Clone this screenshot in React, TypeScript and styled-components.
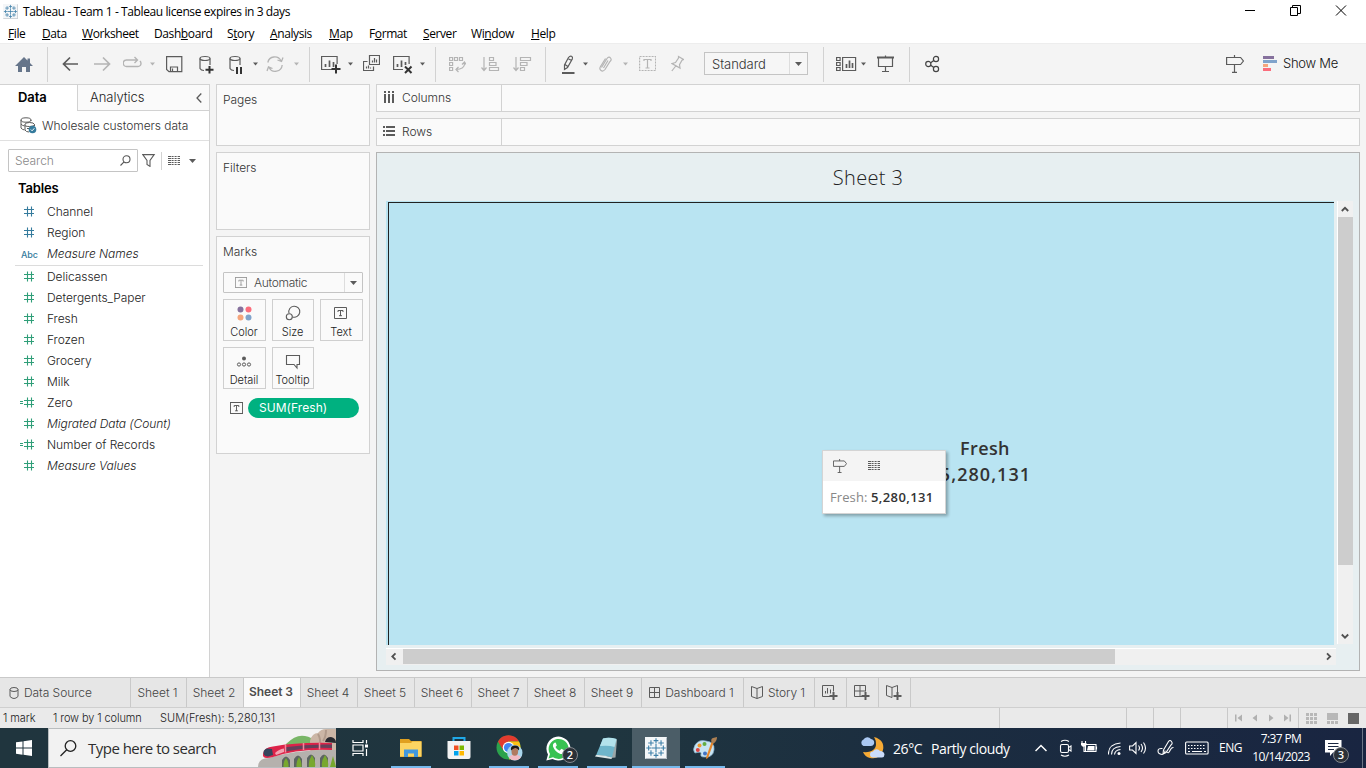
import React from 'react';
import styled, { createGlobalStyle, css } from 'styled-components';

const GlobalStyle = createGlobalStyle`
  * { box-sizing: border-box; }
  html, body { margin: 0; padding: 0; overflow: hidden; }
  svg { display: block; flex: none; }
`;

const ui = '"Inter", "Liberation Sans", sans-serif';
const segoe = '"Open Sans", "Noto Sans", sans-serif';
const line = '#d2d2d2';
const ink = '#5b5b5b';
const faded = '#b4b4b4';

/* ---------- window shell ---------- */

const Window = styled.div`
  width: 1366px;
  height: 768px;
  display: flex;
  flex-direction: column;
  background: #f4f4f4;
  color: #222;
  font-family: ${ui};
  font-size: 12px;
  font-weight: 300;
  letter-spacing: -0.05px;
  white-space: nowrap;
`;

const TitleBar = styled.header`
  height: 23px;
  display: flex;
  align-items: center;
  padding-left: 3px;
  background: #fff;
  color: #000;
  font-family: ${segoe};
  font-size: 12px;
  font-weight: 400;
  letter-spacing: -0.4px;
`;

const TitleText = styled.span`
  flex: 1;
  margin: 0 0 0 5px;
`;

const WindowButtons = styled.div`
  display: flex;
  gap: 34px;
  padding-right: 19px;
  margin-top: -3px;
`;

const MenuBar = styled.nav`
  height: 20px;
  display: grid;
  grid-template-columns: 34px 40px 72px 73px 43px 59px 40px 54px 48px 60px auto;
  align-items: center;
  padding-left: 8px;
  background: #fff;
  color: #000;
  font-family: ${segoe};
  font-size: 12px;
  font-weight: 400;
  line-height: 17px;
  letter-spacing: -0.4px;
  u { text-underline-offset: 1px; }
`;

/* ---------- toolbar ---------- */

const Toolbar = styled.div`
  height: 41px;
  display: flex;
  align-items: flex-start;
  border-top: 1px solid #ededed;
`;

const ToolIcon = styled.svg<{ $gap: number; $color?: string }>`
  height: 20px;
  margin: 10px 0 0 ${(p) => p.$gap}px;
  fill: none;
  stroke: ${(p) => p.$color ?? ink};
  stroke-width: 1.2;
`;

const ToolDivider = styled.span<{ $gap: number }>`
  width: 1px;
  height: 35px;
  margin: 3px 0 0 ${(p) => p.$gap}px;
  background: ${line};
`;

const FitSelect = styled.div`
  width: 104px;
  height: 23px;
  display: flex;
  align-items: center;
  margin: 8px 0 0 20px;
  border: 1px solid #c4c4c4;
  background: #f6f6f6;
  color: #333;
  font-size: 13px;
`;

const SelectText = styled.span`
  flex: 1;
  padding-left: 7px;
`;

const SelectArrow = styled.span`
  width: 18px;
  height: 100%;
  display: flex;
  align-items: center;
  justify-content: center;
  border-left: 1px solid #ddd;
`;

const ShowMe = styled.span`
  width: 83px;
  margin: 11px 0 0 6px;
  font-size: 13px;
  line-height: 17px;
  letter-spacing: -0.25px;
  color: #111;
`;

/* ---------- workspace ---------- */

const Workspace = styled.main`
  height: 593px;
  display: flex;
`;

const DataPane = styled.aside`
  width: 210px;
  border-top: 1px solid ${line};
  border-right: 1px solid ${line};
  background: #fff;
`;

const PaneTabs = styled.div`
  display: flex;
  height: 26px;
  font-size: 13px;
  line-height: 25px;
`;

const ActiveTab = styled.div`
  width: 77px;
  padding-left: 18px;
  font-weight: 600;
  color: #000;
`;

const IdleTab = styled.div`
  flex: 1;
  display: flex;
  align-items: center;
  justify-content: space-between;
  padding: 0 7px 0 12px;
  border-left: 1px solid ${line};
  border-bottom: 1px solid ${line};
  background: #fafafa;
`;

const Source = styled.div`
  height: 30px;
  display: flex;
  align-items: center;
  gap: 5px;
  padding: 0 0 1px 20px;
  border-bottom: 1px solid #e0e0e0;
  color: #333;
`;

const SearchRow = styled.div`
  display: flex;
  align-items: center;
  padding: 8px 0 0 8px;
`;

const SearchBox = styled.div`
  width: 130px;
  height: 23px;
  display: flex;
  align-items: center;
  justify-content: space-between;
  padding: 0 6px;
  border: 1px solid #c4c4c4;
  border-radius: 1px;
  color: #888;
`;

const SearchDivider = styled.span`
  width: 1px;
  height: 18px;
  margin: 0 6px 0 5px;
  background: ${line};
`;

const FilterIcon = styled.svg`
  margin: -1px 0 0 4px;
`;

const MenuArrow = styled.svg`
  margin-left: 9px;
`;

const TablesHeading = styled.h2`
  margin: 8px 0 4px 18px;
  font-size: 13px;
  line-height: 17px;
  font-weight: 600;
  letter-spacing: -0.15px;
  color: #000;
`;

const Field = styled.div<{ $italic?: boolean }>`
  height: 21px;
  display: flex;
  align-items: center;
  gap: 12px;
  padding-left: 18px;
  line-height: 21px;
  font-style: ${(p) => (p.$italic ? 'italic' : 'normal')};
`;

const AbcMark = styled.span`
  width: 17px;
  font-size: 9px;
  font-style: normal;
  font-weight: 500;
  color: #357b9d;
  padding: 1px 0 0 3px;
`;

const FieldDivider = styled.div`
  height: 1px;
  margin: 1px 6px 0 15px;
  background: #dcdcdc;
`;

const CardColumn = styled.section`
  width: 154px;
  margin-left: 6px;
  display: flex;
  flex-direction: column;
  gap: 6px;
`;

const Card = styled.div<{ $height: number }>`
  height: ${(p) => p.$height}px;
  padding: 6px 6px;
  border: 1px solid ${line};
  background: #fafafa;
  color: #333;
  line-height: 17px;
`;

const MarkType = styled.div`
  height: 21px;
  display: flex;
  align-items: center;
  margin: 12px 0 6px;
  border: 1px solid #c4c4c4;
  border-radius: 1px;
  padding-left: 11px;
  color: #444;
  letter-spacing: -0.3px;
`;

const MarkGrid = styled.div`
  display: grid;
  grid-template-columns: 43px 42px 43px;
  grid-auto-rows: 42px;
  gap: 6px;
`;

const MarkButton = styled.div`
  display: flex;
  flex-direction: column;
  align-items: center;
  padding: 3px 1px 0 0;
  border: 1px solid #cfcfcf;
  font-size: 11px;
  line-height: 15px;
  color: #222;
  svg { margin-bottom: 3px; }
`;

const PillRow = styled.div`
  display: flex;
  align-items: center;
  gap: 5px;
  margin: 9px 0 0 7px;
`;

const Pill = styled.div`
  width: 111px;
  height: 20px;
  padding-left: 11px;
  border-radius: 10px;
  background: #00b180;
  color: #fff;
  line-height: 20px;
  letter-spacing: 0.05px;
  font-weight: 400;
`;

const Canvas = styled.section`
  width: 984px;
  margin-left: 6px;
  display: flex;
  flex-direction: column;
  gap: 6px;
`;

const Shelf = styled.div`
  height: 28px;
  border: 1px solid ${line};
  background: #fafafa;
`;

const ShelfLabel = styled.div`
  width: 125px;
  height: 100%;
  display: flex;
  align-items: center;
  gap: 7px;
  padding: 0 0 2px 6px;
  border-right: 1px solid ${line};
  color: #333;
`;

const SheetPanel = styled.div`
  height: 519px;
  border: 1px solid #b3b3b3;
  background: #e7eff1;
`;

const SheetTitle = styled.h1`
  margin: 0;
  height: 48px;
  padding-top: 11px;
  text-align: center;
  font-family: ${segoe};
  font-size: 20px;
  font-weight: 300;
  line-height: 28px;
  letter-spacing: 0.35px;
  color: #222;
`;

const SheetBody = styled.div`
  display: grid;
  grid-template-columns: 948px 17px;
  grid-template-rows: 444px 3px 16px;
  margin-left: 9px;
`;

const View = styled.div`
  height: 444px;
  padding: 1px 0 0 2px;
  background: #bae4f1;
`;

const Plot = styled.div`
  position: relative;
  height: 443px;
  border-top: 1px solid #222;
  border-left: 1px solid #222;
  background: #b9e4f2;
`;

const MarkLabel = styled.div`
  position: absolute;
  left: 516px;
  top: 232px;
  width: 160px;
  text-align: center;
  font-family: ${segoe};
  font-size: 18px;
  font-weight: 600;
  line-height: 26px;
  letter-spacing: 0.4px;
  color: #333;
`;

const MarkValue = styled.div`
  letter-spacing: 1.05px;
  margin-left: 1px;
`;

const Tooltip = styled.div`
  position: absolute;
  left: 433px;
  top: 247px;
  width: 124px;
  height: 64px;
  border: 1px solid #d4d4d4;
  background: #fff;
  box-shadow: 2px 2px 3px rgba(0, 0, 0, 0.3);
`;

const TooltipTools = styled.div`
  height: 30px;
  display: flex;
  align-items: center;
  gap: 21px;
  padding: 0 0 1px 10px;
  background: #f4f4f4;
`;

const TooltipText = styled.div`
  padding: 8px 0 0 7px;
  font-family: ${segoe};
  font-size: 13px;
  font-weight: 400;
  line-height: 17px;
  letter-spacing: 0.1px;
  color: #888;
  b { font-weight: 600; color: #333; letter-spacing: 0.4px; }
`;

const VScroll = styled.div`
  width: 16px;
  height: 443px;
  margin-left: 3px;
  padding: 0 1px 0 0;
  display: flex;
  flex-direction: column;
  align-items: center;
  border-left: 1px solid #fff;
  background: #f0f0f0;
`;

const HScroll = styled.div`
  grid-row: 3;
  width: 950px;
  height: 17px;
  display: flex;
  border-top: 1px solid #fff;
  background: #f0f0f0;
`;

const Thumb = styled.div<{ $w: number; $h: number }>`
  width: ${(p) => p.$w}px;
  height: ${(p) => p.$h}px;
  background: #cdcdcd;
`;

const Spacer = styled.div`
  flex: 1;
`;

/* ---------- sheet tabs and status ---------- */

const SheetTabs = styled.div`
  height: 31px;
  display: flex;
  border-top: 1px solid #c9c9c9;
  border-bottom: 1px solid #cfcfcf;
  background: #e6e6e6;
`;

const SheetTab = styled.div<{ $width: number; $active?: boolean; $left?: boolean }>`
  width: ${(p) => p.$width}px;
  display: flex;
  align-items: center;
  justify-content: ${(p) => (p.$left ? 'flex-start' : 'center')};
  gap: 5px;
  padding-right: 2px;
  border-right: 1px solid #c9c9c9;
  color: #444;
  ${(p) => p.$left && css`padding-left: 9px;`}
  ${(p) =>
    p.$active &&
    css`
      background: #fafafa;
      color: #4e4e4e;
      font-weight: 600;
      padding-bottom: 2px;
    `}
`;

const StatusBar = styled.div`
  height: 20px;
  display: flex;
  align-items: center;
  padding-left: 3px;
  background: #eaeaea;
  font-size: 11px;
`;

const StatusText = styled.span<{ $width: number; $spacing: number }>`
  width: ${(p) => p.$width}px;
  letter-spacing: ${(p) => p.$spacing}px;
`;

const StatusCell = styled.div<{ $width: number }>`
  width: ${(p) => p.$width}px;
  height: 20px;
  display: flex;
  align-items: center;
  justify-content: center;
  border-left: 1px solid #c9c9c9;
`;

/* ---------- taskbar ---------- */

const Taskbar = styled.footer`
  height: 40px;
  display: flex;
  background: linear-gradient(90deg, #20353e 0%, #1f353f 45%, #1b2d40 68%, #192541 100%);
  color: #fff;
  font-family: ${segoe};
  font-weight: 400;
`;

const StartButton = styled.div`
  width: 48px;
  padding: 12px 0 0 16px;
`;

const TaskSearch = styled.div`
  width: 288px;
  height: 40px;
  display: flex;
  align-items: center;
  border: 1px solid #b9bdbf;
  border-right: 0;
  background: #f2f2f2;
  color: #2e2e2e;
  padding-left: 11px;
  font-size: 15px;
  letter-spacing: -0.52px;
`;

const SearchHint = styled.span`
  flex: 1;
  padding-left: 11px;
`;

const TaskItem = styled.div<{ $gap?: number; $open?: boolean; $focused?: boolean }>`
  position: relative;
  width: 48px;
  height: 40px;
  display: flex;
  align-items: center;
  justify-content: center;
  margin-left: ${(p) => p.$gap ?? 0}px;
  background: ${(p) => (p.$focused ? '#4b5d67' : 'transparent')};
  ${(p) =>
    p.$open &&
    css`
      &::after {
        content: '';
        position: absolute;
        left: ${p.$focused ? 0 : 4}px;
        right: ${p.$focused ? 0 : 4}px;
        bottom: 0;
        height: 2px;
        background: #76b9ed;
      }
    `}
`;

const CountBadge = styled.span<{ $x: number; $y: number }>`
  position: absolute;
  left: ${(p) => p.$x}px;
  top: ${(p) => p.$y}px;
  width: 16px;
  height: 16px;
  border: 1px solid #85898f;
  border-radius: 50%;
  background: #2b3138;
  color: #fff;
  text-align: center;
  font-size: 11px;
  line-height: 14px;
  letter-spacing: 0;
  font-weight: 600;
`;

const Weather = styled.div`
  display: flex;
  align-items: center;
  margin-left: 131px;
  width: 175px;
  font-size: 14px;
  letter-spacing: -0.4px;
`;

const Temperature = styled.span`
  width: 38px;
  margin-left: 8px;
`;

const TrayIcon = styled.svg<{ $gap: number }>`
  height: 20px;
  margin: 10px 0 0 ${(p) => p.$gap}px;
  fill: none;
  stroke: #fff;
  stroke-width: 1.1;
`;

const Language = styled.span`
  width: 24px;
  margin-left: 10px;
  font-size: 12px;
  line-height: 39px;
  letter-spacing: -0.5px;
`;

const Clock = styled.div`
  width: 58px;
  margin-left: 9px;
  padding-top: 2px;
  text-align: center;
  font-size: 12px;
  line-height: 18px;
  letter-spacing: -0.62px;
`;

const Notifications = styled.div`
  position: relative;
  margin: 12px 0 0 15px;
`;

const DesktopEdge = styled.span`
  width: 1px;
  margin-left: auto;
  margin-right: 3px;
  background: #6b7585;
`;

/* ---------- shared drawings ---------- */

const Caret = ({ gap, color = ink }: { gap: number; color?: string }) => (
  <ToolIcon $gap={gap} width="5" viewBox="0 0 5 20">
    <path d="M0 8.5h5L2.5 11.5z" fill={color} stroke="none" />
  </ToolIcon>
);

const DropArrow = () => (
  <svg width="7" height="4" viewBox="0 0 7 4"><path d="M0 0h7L3.5 4z" fill="#5b5b5b" /></svg>
);

const TextMark = ({ w = 14, h = 12, color = '#5b5b5b' }: { w?: number; h?: number; color?: string }) => (
  <svg width={w} height={h} viewBox="0 0 14 12" preserveAspectRatio="none" fill="none" stroke={color}>
    <rect x=".5" y=".5" width="13" height="11" />
    <path d="M4.5 5V3.5h5V5M7 3.5v5.5M5.5 8.8h3" />
  </svg>
);

const Signpost = ({ size = 14 }: { size?: number }) => (
  <svg width={size} height={size} viewBox="0 0 18 18" fill="none" stroke={ink} strokeWidth="1.2">
    <path d="M.6 2.5h14l2.8 3.5-2.8 3.5H.6zM8.5 0v2.5M8.5 9.5v8M6 17.4h5" />
  </svg>
);

const DataGrid = () => (
  <svg width="12" height="9" viewBox="0 0 12 9" stroke={ink} strokeDasharray="3 .6 2 1 2 1 3 0">
    <path d="M0 .5h12M0 2.5h12M0 4.5h12M0 6.5h12M0 8.5h12" />
  </svg>
);

const Hash = ({ color, calc }: { color: string; calc?: boolean }) => (
  <svg width="17" height="11" viewBox="0 0 17 11" fill="none" stroke={color}>
    <path d="M6 3.5h10M6 7.5h10M9.5.5v10M13.5.5v10" strokeWidth="1.1" />
    {calc && <path d="M2 4.5h3M2 6.5h3" />}
  </svg>
);

const starPluses = [
  [12, 12, 5], [12, 4, 2.6], [12, 20, 2.6], [4, 12, 2.6], [20, 12, 2.6],
  [6.5, 6.5, 3], [17.5, 6.5, 3], [6.5, 17.5, 3], [17.5, 17.5, 3],
];

const TableauMark = ({ size }: { size: number }) => (
  <svg width={size} height={size} viewBox="0 0 24 24">
    <rect width="24" height="24" fill="#f4f6f8" />
    <path d="M.5 23.5h23V.5" fill="none" stroke="#aab4bc" />
    <g stroke="#3d7fa8" strokeWidth="1.2">
      {starPluses.map(([x, y, r]) => (
        <path key={`${x}-${y}`} d={`M${x - r} ${y}h${r * 2}M${x} ${y - r}v${r * 2}`} />
      ))}
    </g>
  </svg>
);

const ChartPlus = () => (
  <svg width="16" height="16" viewBox="0 0 16 16" fill="none" stroke={ink}>
    <path d="M8 11.5H.5V.5h11v6M3.5 8.5V6M5.5 8.5V3M8.5 8.5V4.5" />
    <path d="M11.5 7v8M7.5 11h8" strokeWidth="2" />
  </svg>
);

const GridPlus = () => (
  <svg width="16" height="16" viewBox="0 0 16 16" fill="none" stroke={ink}>
    <path d="M8 11.5H.5V.5h11v6M.5 6h11M6 .5v11" />
    <path d="M11.5 7v8M7.5 11h8" strokeWidth="2" />
  </svg>
);

const StoryPlus = () => (
  <svg width="16" height="16" viewBox="0 0 16 16" fill="none" stroke={ink}>
    <path d="M6 12.5L.5 10.5V.5L6 2.5L11.5.5V7M6 2.5v10" />
    <path d="M11.5 7v8M7.5 11h8" strokeWidth="2" />
  </svg>
);

const fields: { name: string; kind: 'dim' | 'abc' | 'measure' | 'calc'; italic?: boolean }[] = [
  { name: 'Channel', kind: 'dim' },
  { name: 'Region', kind: 'dim' },
  { name: 'Measure Names', kind: 'abc', italic: true },
  { name: 'Delicassen', kind: 'measure' },
  { name: 'Detergents_Paper', kind: 'measure' },
  { name: 'Fresh', kind: 'measure' },
  { name: 'Frozen', kind: 'measure' },
  { name: 'Grocery', kind: 'measure' },
  { name: 'Milk', kind: 'measure' },
  { name: 'Zero', kind: 'calc' },
  { name: 'Migrated Data (Count)', kind: 'measure', italic: true },
  { name: 'Number of Records', kind: 'calc' },
  { name: 'Measure Values', kind: 'measure', italic: true },
];

const FieldRow = ({ field }: { field: (typeof fields)[number] }) => (
  <Field $italic={field.italic}>
    {field.kind === 'abc' ? (
      <AbcMark>Abc</AbcMark>
    ) : (
      <Hash color={field.kind === 'dim' ? '#357b9d' : '#2f9e78'} calc={field.kind === 'calc'} />
    )}
    {field.name}
  </Field>
);

const AppToolbar = () => (
  <Toolbar>
    <ToolIcon $gap={15} width="18" viewBox="0 0 18 20">
      <path d="M9 3L0 12h3v6h4v-5h4v5h4v-6h3l-3-3V4.5h-2.5V6.5z" fill="#66758a" stroke="none" />
    </ToolIcon>
    <ToolDivider $gap={14} />
    <ToolIcon $gap={14} width="17" viewBox="0 0 17 20">
      <path d="M16 10H1.5M8 3.5L1.5 10L8 16.5" strokeWidth="1.7" />
    </ToolIcon>
    <ToolIcon $gap={15} $color={faded} width="17" viewBox="0 0 17 20">
      <path d="M0 10h15.5M9 3.5L15.5 10L9 16.5" strokeWidth="1.7" />
    </ToolIcon>
    <ToolIcon $gap={12} $color={faded} width="19" viewBox="0 0 19 20">
      <path d="M14 12.5H3.5a3 3 0 0 1 0-6.500H14M14 12.5h1a3 3 0 0 0 3-3q0-1.500-1-2.500M11.5 3L14.5 6L11.5 9" strokeWidth="1.4" />
    </ToolIcon>
    <Caret gap={8} color={faded} />
    <ToolIcon $gap={11} width="17" viewBox="0 0 17 20">
      <path d="M.6 2.6h15.2v15H3L.6 15.4zM4.500 17.5v-4.500h7v4.500M6.500 17v-2.500" />
    </ToolIcon>
    <ToolIcon $gap={16} width="15" viewBox="0 0 15 20">
      <ellipse cx="6" cy="4.5" rx="5" ry="2" />
      <path d="M1 4.5v10q1 2 4 2M11 4.5V11" />
      <path d="M10.5 12v7.500M6.5 15.7h8" stroke="#333" strokeWidth="2" />
    </ToolIcon>
    <ToolIcon $gap={15} width="14" viewBox="0 0 14 20">
      <ellipse cx="6" cy="4.5" rx="5" ry="2" />
      <path d="M1 4.5v10q1 2 4 2M11 4.5V11" />
      <path d="M8 13v7M12 13v7" stroke="#333" strokeWidth="2" />
    </ToolIcon>
    <Caret gap={10} />
    <ToolIcon $gap={8} $color={faded} width="18" viewBox="0 0 18 20">
      <path d="M1.8 8.5A7 7 0 0 1 15 7M16.2 11A7 7 0 0 1 3 13.5M17 3.5L15.5 7.5L11.5 6M1 17L2.5 12.8L6.5 14.5" strokeWidth="1.3" />
    </ToolIcon>
    <Caret gap={10} color={faded} />
    <ToolDivider $gap={10} />
    <ToolIcon $gap={11} width="20" viewBox="0 0 20 20">
      <path d="M11 15.5H.6V2.5h15.500V10" />
      <path d="M4.5 13V10M8.5 13V6.5M12.5 13V8" strokeWidth="1.7" />
      <path d="M15 10.5v9M10.5 15h9" stroke="#333" strokeWidth="2" />
    </ToolIcon>
    <Caret gap={7} />
    <ToolIcon $gap={10} width="17" viewBox="0 0 17 20">
      <path d="M6.5 1.5h10v9h-10zM4.5 7.5H.5v9h10v-4M9.5 8.5v-2M11.5 8.5V4M13.5 8.5V5.5M3.5 14.5v-2M5.5 14.5v-3M7.5 14.5v-1" />
    </ToolIcon>
    <ToolIcon $gap={13} width="20" viewBox="0 0 20 20">
      <path d="M10 15.5H.6V2.5h15.500V10" />
      <path d="M4.5 13V10M8.5 13V6.5M12.5 11V8" strokeWidth="1.7" />
      <path d="M12 12.5l6.500 6.500M18.5 12.5L12 19" stroke="#333" strokeWidth="2" />
    </ToolIcon>
    <Caret gap={7} />
    <ToolDivider $gap={10} />
    <ToolIcon $gap={13} $color={faded} width="17" viewBox="0 0 17 20">
      <path d="M.6 3.5h3v3h-3zM5.500 3.500h3v3h-3zM10.500 3.5h3v3h-3zM.6 8.500h3v3h-3zM.6 13.500h3v3h-3zM15.500 8v2q0 5-8.500 5.500M13 10.500L15.500 8L17 10.500M9.5 13L7 15.5L9.5 18" />
    </ToolIcon>
    <ToolIcon $gap={15} $color={faded} width="19" viewBox="0 0 19 20">
      <path d="M3 3v13M.5 13.5L3 16.5L5.5 13.5M8.5 3.5h4v3h-4zM8.5 8.500h6.500v3H8.5zM8.5 13.500h9v3h-9z" />
    </ToolIcon>
    <ToolIcon $gap={13} $color={faded} width="19" viewBox="0 0 19 20">
      <path d="M3 3v13M.5 13.5L3 16.5L5.5 13.5M7.5 3.5h10v3h-10zM7.5 8.500h6.500v3H7.5zM7.5 13.500h4v3h-4z" />
    </ToolIcon>
    <ToolDivider $gap={13} />
    <ToolIcon $gap={16} width="13" viewBox="0 0 13 20">
      <path d="M6.500 3.500Q8 1.500 9.500 2.200T10.300 5L5.500 13.500L2.500 15.500V11zM3 10.5L5.8 12.5M6 4.500L9.5 6.5" />
      <path d="M0 19h12.5" strokeWidth="2" />
    </ToolIcon>
    <Caret gap={8} />
    <ToolIcon $gap={11} $color={faded} width="13" viewBox="0 0 13 20">
      <path d="M2.5 13.5L8 4.5Q10 2 11.5 4T11 7.5L6 15.5Q4 18 2 16.5T1.5 12.5L6.5 4.5M4.5 14L9 6.5" />
    </ToolIcon>
    <Caret gap={11} color={faded} />
    <ToolIcon $gap={11} $color={faded} width="17" viewBox="0 0 17 20">
      <path d="M.6 2.5h16v14H.6z" strokeDasharray="2 1" />
      <path d="M5 7V5.5h7V7M8.5 5.5v8.500M6.5 14h4" />
    </ToolIcon>
    <ToolIcon $gap={15} $color={faded} width="13" viewBox="0 0 13 20">
      <path d="M7.5 2.5l5 3-1.500.7-2.500 4.500.5 3.300L1 9.5l3.500-1L7.5 4zM4.8 12L.8 17" />
    </ToolIcon>
    <FitSelect>
      <SelectText>Standard</SelectText>
      <SelectArrow><DropArrow /></SelectArrow>
    </FitSelect>
    <ToolDivider $gap={15} />
    <ToolIcon $gap={12} width="21" viewBox="0 0 21 20">
      <path d="M.6 3.5h3.500v3H.6zM.6 8.5h3.500v3H.6zM.6 13.5h3.500v3H.6zM6.6 3.5h13v13h-13z" />
      <path d="M10.5 14v-4M13.5 14V6.5M16.5 14V9" strokeWidth="1.7" />
    </ToolIcon>
    <Caret gap={4} />
    <ToolIcon $gap={11} width="17" viewBox="0 0 17 20">
      <path d="M0 3.5h17" strokeWidth="2" />
      <path d="M1.5 3.5v9h14v-9M8.5 12.5v5M5 17.5h7M8.5 1.5v2" />
    </ToolIcon>
    <ToolDivider $gap={15} />
    <ToolIcon $gap={15} width="15" viewBox="0 0 15 20" $color="#444">
      <path d="M5.7 8.8L8.8 6.5M5.7 11.2L8.8 13.5" />
      <circle cx="3.3" cy="10" r="2.6" /><circle cx="11" cy="5" r="2.6" /><circle cx="11" cy="15" r="2.6" />
    </ToolIcon>
    <Spacer />
    <ToolIcon $gap={0} width="18" viewBox="0 0 18 20">
      <path d="M.6 3.5h14l2.800 3.500-2.800 3.500H.6zM8.5 1v2.500M8.5 10.5v8M6 18.4h5" />
    </ToolIcon>
    <ToolIcon $gap={19} width="14" viewBox="0 0 14 20">
      <g stroke="none">
        <rect y="2" width="11" height="3" fill="#86719d" />
        <rect y="6" width="14" height="3" fill="#80a3cb" />
        <rect y="10" width="5" height="3" fill="#f5a57c" />
        <rect y="14" width="8" height="3" fill="#fb6d7c" />
      </g>
    </ToolIcon>
    <ShowMe>Show Me</ShowMe>
  </Toolbar>
);

const MarksCard = () => (
  <Card $height={218}>
    Marks
    <MarkType>
      <TextMark w={12} h={11} color="#999" />
      <SelectText>Automatic</SelectText>
      <SelectArrow><DropArrow /></SelectArrow>
    </MarkType>
    <MarkGrid>
      <MarkButton>
        <svg width="18" height="19" viewBox="0 0 18 19">
          <circle cx="5.5" cy="6.5" r="3" fill="#86719d" /><circle cx="13.5" cy="6.5" r="3" fill="#fb6d7c" />
          <circle cx="5.5" cy="14.500" r="3" fill="#f5a57c" /><circle cx="13.5" cy="14.500" r="3" fill="#80a3cb" />
        </svg>
        Color
      </MarkButton>
      <MarkButton>
        <svg width="18" height="19" viewBox="0 0 18 19" fill="none" stroke={ink} strokeWidth="1.1">
          <path d="M5 10.2A5.5 5.5 0 1 1 8.5 13.9" /><circle cx="5.3" cy="13.8" r="3" />
        </svg>
        Size
      </MarkButton>
      <MarkButton>
        <svg width="18" height="19" viewBox="0 0 18 19" fill="none" stroke={ink}>
          <path d="M2.5 4.5h12v11h-12zM6 9V7.500h5V9M8.5 7.500V13M7 12.700h3" />
        </svg>
        Text
      </MarkButton>
      <MarkButton>
        <svg width="18" height="19" viewBox="0 0 18 19" fill="none" stroke={ink}>
          <circle cx="9" cy="7.500" r="2" fill={ink} stroke="none" />
          <circle cx="4" cy="13.500" r="1.6" /><circle cx="9" cy="13.500" r="1.6" /><circle cx="14" cy="13.500" r="1.6" />
        </svg>
        Detail
      </MarkButton>
      <MarkButton>
        <svg width="18" height="19" viewBox="0 0 18 19" fill="none" stroke={ink} strokeWidth="1.1">
          <path d="M2.5 4.5h13v9h-2.500v3.500L10 13.500H2.500z" />
        </svg>
        Tooltip
      </MarkButton>
    </MarkGrid>
    <PillRow>
      <TextMark w={13} h={12} />
      <Pill>SUM(Fresh)</Pill>
    </PillRow>
  </Card>
);

const TrainArt = () => (
  <svg width="78" height="38" viewBox="0 0 78 38">
    <path d="M28 15Q38 5 47 7q7 1 10 6v8H28z" fill="#79b667" />
    <path d="M52 12Q54 4 60 4Q63 0 68 0h10v38H53z" fill="#cbb6a6" />
    <path d="M60 5q3 5 2 12M68 1q0 7-3 11" stroke="#b09a8b" strokeWidth="2" fill="none" />
    <path d="M67 13q1-5 6-5q5 1 5 6z" fill="#292a30" />
    <path d="M0 38q0-9 11-9Q38 20 78 21v17z" fill="#b5b1ad" />
    <g fill="#5c6462">
      <path d="M24 38V31q4-7 8 0v7zM36 38V30q4-7 8 0v8zM49 38V29q4-7 8 0v9zM62 38V29q4-7 8 0v9z" />
    </g>
    <g fill="#78a82e">
      <path d="M28 29q3 4 2.500 9h-5q-.5-5 2.500-9zM41 28q3 5 2.500 10h-5q-.5-5 2.500-10zM54 26q4 6 3 12h-6q-1-6 3-12zM67 26q4 6 3 12h-6q-1-6 3-12zM75 27l3 11h-6z" />
    </g>
    <path d="M5 25Q6 18 15 17.500Q40 13 74 14v7Q40 19.500 15 28Q4 31 5 25z" fill="#dc2349" />
    <path d="M27 18.300Q50 14.800 74 15.500v3.500Q50 17.500 28 22.500z" fill="#64405a" />
    <path d="M5.500 23q1-3.500 4-3.500l4.500.5 1 6-5 1.500q-5-.5-4.500-4.500z" fill="#34445c" />
    <path d="M17 24q4-4 9-4.500v3.500L18 26z" fill="#f2a3b2" />
    <path d="M27.500 15.500v8M45.500 14v7M61.500 13.500v7" stroke="#f58a9d" strokeWidth="1.500" />
  </svg>
);

const AppTaskbar = () => (
  <Taskbar>
    <StartButton>
      <svg width="16" height="16" viewBox="0 0 16 16" fill="#fff">
        <path d="M0 2.3L6.5 1.4V7.5H0zM7.5 1.2L16 0v7.500H7.5zM0 8.5h6.500v6.200L0 13.8zM7.5 8.5H16V16l-8.500-1.200z" />
      </svg>
    </StartButton>
    <TaskSearch>
      <svg width="17" height="17" viewBox="0 0 17 17" fill="none" stroke="#222" strokeWidth="1.3">
        <circle cx="10.5" cy="6" r="5.3" /><path d="M6.7 9.8L.5 16" />
      </svg>
      <SearchHint>Type here to search</SearchHint>
      <TrainArt />
    </TaskSearch>
    <TaskItem>
      <svg width="17" height="16" viewBox="0 0 17 16" fill="none" stroke="#fff" strokeWidth="1.2">
        <path d="M1 0v2.500h10V0M1 16v-2.500h10V16M1 5h10v6H1zM14.5 0v3.500M14.5 9v7" />
        <path d="M13 4.5h3v3h-3z" fill="#fff" stroke="none" />
      </svg>
    </TaskItem>
    <TaskItem $gap={3} $open>
      <svg width="22" height="18" viewBox="0 0 22 18">
        <path d="M0 0h9l2 2h10.500v16H0z" fill="#e0a020" />
        <path d="M0 4h11l1.500-1.500h9V17.5H0z" fill="#fcd462" />
        <path d="M4 18v-7.500h14V18h-4v-3.500H8V18z" fill="#4298dd" />
      </svg>
    </TaskItem>
    <TaskItem>
      <svg width="24" height="24" viewBox="0 0 24 24">
        <path d="M6.5 6V2h11v4" fill="none" stroke="#20a9e8" strokeWidth="2" />
        <path d="M.5 5h23v16a2 2 0 0 1-2 2h-19a2 2 0 0 1-2-2z" fill="#f3f3f3" />
        <path d="M7 9.5h4.500V14H7z" fill="#f15022" /><path d="M12.5 9.5H17V14h-4.500z" fill="#7eb900" />
        <path d="M7 15h4.500v4.500H7z" fill="#00a3ee" /><path d="M12.5 15H17v4.500h-4.500z" fill="#ffb800" />
      </svg>
    </TaskItem>
    <TaskItem $gap={2} $open>
      <svg width="27" height="26" viewBox="0 0 27 26">
        <circle cx="12.5" cy="12.5" r="12" fill="#2ba24c" />
        <path d="M2 6.5A12 12 0 0 1 23 6.5H12.5L7 15z" fill="#e33b2e" />
        <path d="M23 6.5A12 12 0 0 1 13 24.5L17 15L12.5 6.5z" fill="#fbc116" />
        <circle cx="12.5" cy="12.5" r="5.8" fill="#fff" /><circle cx="12.5" cy="12.5" r="4.6" fill="#4285f4" />
        <circle cx="18.8" cy="17.8" r="7.7" fill="#a9d6ec" />
        <path d="M12.8 22.5q1-2.500 6-2.700q5 .2 6 2.700a7.700 7.700 0 0 1-12 0z" fill="#f1bbc4" />
        <ellipse cx="18.8" cy="16.5" rx="3.3" ry="4.3" fill="#b07a60" />
        <path d="M15 15.5q-1-5 4-5t4 5q-2-3-4-2.500T15 15.5z" fill="#1c1717" />
      </svg>
    </TaskItem>
    <TaskItem $gap={1} $open>
      <svg width="25" height="25" viewBox="0 0 25 25">
        <path d="M.3 24.5L2 18.5A12 12 0 1 1 6.5 23z" fill="#fff" />
        <path d="M2.5 22.5L4 18A10 10 0 1 1 7 21.2z" fill="#38c251" />
        <path d="M9 6.5q-2.500 1-2 4Q9 16 14.500 18q3 .5 4-2v-1.500l-3-1.700-2 2Q10.5 13.500 9.500 11l1.300-1.500L9.800 6.700z" fill="#fff" />
      </svg>
      <CountBadge $x={28} $y={19}>2</CountBadge>
    </TaskItem>
    <TaskItem $gap={1} $open>
      <svg width="24" height="22" viewBox="0 0 24 22">
        <path d="M20 3l2-.5-1.500 18L16 21z" fill="#9aa6a8" />
        <path d="M8 1.500Q14-.3 21.500 2L17 20.500Q9 18 1 18.500z" fill="#6fb5ca" />
        <path d="M8 1.500Q14-.3 21.500 2L19.500 10Q14 8 5 9z" fill="#b4e2eb" />
        <path d="M1 18Q9 17.500 17 20.500L16.500 22L0 19.500z" fill="#dce7e8" />
      </svg>
    </TaskItem>
    <TaskItem $gap={1} $open $focused><TableauMark size={22} /></TaskItem>
    <TaskItem $gap={1} $open>
      <svg width="25" height="24" viewBox="0 0 25 24">
        <path d="M2 9Q6 3 13 5q9 1 8 9t-10 7Q7 21 8 18T2 17q-3-3 0-8z" fill="#c8e4f3" stroke="#80aac5" strokeWidth=".7" />
        <circle cx="6.5" cy="9.5" r="2" fill="#ef9b30" /><circle cx="11.5" cy="8" r="2" fill="#62ae43" />
        <circle cx="4.8" cy="14" r="2" fill="#db4344" /><circle cx="12" cy="17.5" r="2" fill="#4173c3" />
        <path d="M18.5 6L20.5 7L15 22l-2 1 .5-3z" fill="#e6872c" />
        <path d="M18.5 6.5q-1-4 1.500-4.500l4-1q0 4-3.500 6.500z" fill="#ad8053" />
      </svg>
    </TaskItem>
    <Weather>
      <svg width="25" height="24" viewBox="0 0 25 24">
        <path d="M14 1Q25 4 23 14Q20 24 10 22Q5 21 3 16q10 1 12.500-5Q17 6 14 1z" fill="#f6aa35" />
        <path d="M3.5 10a3.500 3.500 0 0 1 0-6.500A4.5 4.5 0 0 1 11 3q4 1 3 5-1 2-3 2z" fill="#abc9f3" />
        <path d="M13 21.5a3 3 0 0 1 0-6a4 4 0 0 1 7-.5q4 0 4.500 3.500 0 2.500-2.500 3z" fill="#cadcfb" />
      </svg>
      <Temperature>26°C</Temperature>
      Partly cloudy
    </Weather>
    <TrayIcon $gap={0} width="12" viewBox="0 0 12 20"><path d="M.5 13L6 7.5L11.5 13" strokeWidth="1.5" /></TrayIcon>
    <TrayIcon $gap={12} width="13" viewBox="0 0 13 20">
      <rect x="1.5" y="6.5" width="8" height="8" rx="1.5" /><path d="M9.5 9.5L12 8v5l-2.500-1.500M2 3.5q4-2.500 8 0M2 17q4 2.500 8 0" />
    </TrayIcon>
    <TrayIcon $gap={9} width="17" viewBox="0 0 17 20">
      <path d="M4.5 6.500h10.500v7H4.5zM15.5 8.500v3M3 9v4.500h2M1 3v2M4.5 3v2" />
      <path d="M0 5h5.500v2q-2.500 4-5.500 0zM7 8h6.500v4.500H6z" fill="#fff" stroke="none" />
    </TrayIcon>
    <TrayIcon $gap={10} width="13" viewBox="0 0 13 20">
      <path d="M.5 16.5Q0 6 12.500 5M3.5 16.5Q3.5 9 12.500 8.500M6.5 16.5Q7 12 12.500 11.500" /><circle cx="11" cy="15.5" r="1.5" fill="#fff" stroke="none" />
    </TrayIcon>
    <TrayIcon $gap={8} width="18" viewBox="0 0 18 20">
      <path d="M.6 8h3L7 4.5v11L3.5 12H.6zM9.5 7.5q2 2.500 0 5M12 6q3 4 0 8M14.5 4.5q4 5.500 0 11" />
    </TrayIcon>
    <TrayIcon $gap={10} width="17" viewBox="0 0 17 20">
      <path d="M6.5 12L11.500 3.500q1.500-2 3 0t-.5 3.500L9 14.500l-3 1.500zM5.5 10.5Q1 10 1 13t4 3.500q3-.5 3-4M10 14q1.500 2 3-1.500t3.500-3" />
    </TrayIcon>
    <TrayIcon $gap={11} width="24" viewBox="0 0 24 20">
      <rect x=".6" y="4" width="22.5" height="12" rx="1" />
      <path d="M3 7.500h18M3 10.500h18" strokeDasharray="1.5 1.500" /><path d="M3 13.500h2M7 13.500h10M19 13.500h2" />
    </TrayIcon>
    <Language>ENG</Language>
    <Clock>7:37 PM<br />10/14/2023</Clock>
    <Notifications>
      <svg width="17" height="17" viewBox="0 0 17 17">
        <path d="M0 0h16.500v12.500H8L5 16v-3.500H0z" fill="#fff" /><path d="M3 3.5h10.500M3 6.5h10.500M3 9.5h6" stroke="#1a2741" />
      </svg>
      <CountBadge $x={8} $y={7}>3</CountBadge>
    </Notifications>
    <DesktopEdge />
  </Taskbar>
);

const numberedTabs = [
  ['Sheet 1', 56], ['Sheet 2', 57], ['Sheet 3', 57], ['Sheet 4', 57], ['Sheet 5', 57],
  ['Sheet 6', 57], ['Sheet 7', 56], ['Sheet 8', 57], ['Sheet 9', 57],
] as const;

export default function App() {
  return (
    <Window>
      <GlobalStyle />
      <TitleBar>
        <TableauMark size={15} />
        <TitleText>Tableau - Team 1 - Tableau license expires in 3 days</TitleText>
        <WindowButtons>
          <svg width="11" height="11" viewBox="0 0 11 11" stroke="#000"><path d="M0 5.5h10" /></svg>
          <svg width="11" height="11" viewBox="0 0 11 11" stroke="#000" fill="none"><path d="M.5 2.5h7v8h-7zM2.5 2.5v-2h8v8h-3" /></svg>
          <svg width="12" height="11" viewBox="0 0 12 11" stroke="#000"><path d="M1 .5l10 10M11 .5l-10 10" /></svg>
        </WindowButtons>
      </TitleBar>
      <MenuBar>
        <span><u>F</u>ile</span><span><u>D</u>ata</span><span><u>W</u>orksheet</span>
        <span>Dash<u>b</u>oard</span><span>S<u>t</u>ory</span><span><u>A</u>nalysis</span>
        <span><u>M</u>ap</span><span>F<u>o</u>rmat</span><span><u>S</u>erver</span>
        <span>Wi<u>n</u>dow</span><span><u>H</u>elp</span>
      </MenuBar>
      <AppToolbar />
      <Workspace>
        <DataPane>
          <PaneTabs>
            <ActiveTab>Data</ActiveTab>
            <IdleTab>
              Analytics
              <svg width="6" height="10" viewBox="0 0 6 10" fill="none" stroke={ink} strokeWidth="1.3"><path d="M5.3.5L1 5l4.300 4.500" /></svg>
            </IdleTab>
          </PaneTabs>
          <Source>
            <svg width="17" height="17" viewBox="0 0 17 17" fill="none" stroke={ink}>
              <ellipse cx="6" cy="3" rx="5" ry="2.2" />
              <path d="M1 3v8q1 1.500 3.500 2M1 7q1 1.500 3.500 2M11 3v1M5 7.5q0-2 4.500-2t5 2-5 2-4.500-2v5.500q1 2 4 2M14.5 7.5V9M7 11.5h3" />
              <circle cx="12.5" cy="12.5" r="3.8" fill="#357b9d" stroke="none" />
              <path d="M10.8 12.5l1.300 1.300 2.200-2.500" stroke="#fff" />
            </svg>
            Wholesale customers data
          </Source>
          <SearchRow>
            <SearchBox>
              Search
              <svg width="11" height="11" viewBox="0 0 11 11" fill="none" stroke="#555" strokeWidth="1.1"><circle cx="6.5" cy="4.3" r="3.5" /><path d="M4 6.8L.5 10.5" /></svg>
            </SearchBox>
            <FilterIcon width="14" height="13" viewBox="0 0 14 13" fill="none" stroke={ink} strokeWidth="1.1"><path d="M.8.6h11.400L8 6.5v5.900L5 10.5v-4z" /></FilterIcon>
            <SearchDivider />
            <DataGrid />
            <MenuArrow width="7" height="4" viewBox="0 0 7 4"><path d="M0 0h7L3.5 4z" fill={ink} /></MenuArrow>
          </SearchRow>
          <TablesHeading>Tables</TablesHeading>
          {fields.slice(0, 3).map((f) => <FieldRow key={f.name} field={f} />)}
          <FieldDivider />
          {fields.slice(3).map((f) => <FieldRow key={f.name} field={f} />)}
        </DataPane>
        <CardColumn>
          <Card $height={62}>Pages</Card>
          <Card $height={78}>Filters</Card>
          <MarksCard />
        </CardColumn>
        <Canvas>
          <Shelf>
            <ShelfLabel>
              <svg width="12" height="12" viewBox="0 0 12 12" fill={ink}><path d="M1 0h2v2H1zM5 0h2v2H5zM9 0h2v2H9zM1 3h2v9H1zM5 3h2v9H5zM9 3h2v9H9z" /></svg>
              Columns
            </ShelfLabel>
          </Shelf>
          <Shelf>
            <ShelfLabel>
              <svg width="12" height="10" viewBox="0 0 12 10" fill={ink}><path d="M0 0h2v2H0zM0 4h2v2H0zM0 8h2v2H0zM3 0h9v2H3zM3 4h9v2H3zM3 8h9v2H3z" /></svg>
              Rows
            </ShelfLabel>
          </Shelf>
          <SheetPanel>
            <SheetTitle>Sheet 3</SheetTitle>
            <SheetBody>
              <View>
                <Plot>
                  <MarkLabel>Fresh<MarkValue>5,280,131</MarkValue></MarkLabel>
                  <Tooltip>
                    <TooltipTools><Signpost /><DataGrid /></TooltipTools>
                    <TooltipText>Fresh: <b>5,280,131</b></TooltipText>
                  </Tooltip>
                </Plot>
              </View>
              <VScroll>
                <svg width="8" height="16" viewBox="0 0 8 16" fill="none" stroke="#505050" strokeWidth="1.8"><path d="M.8 10L4 6.8l3.200 3.200" /></svg>
                <Thumb $w={15} $h={348} />
                <Spacer />
                <svg width="8" height="16" viewBox="0 0 8 16" fill="none" stroke="#505050" strokeWidth="1.8"><path d="M.8 6.5L4 9.7l3.200-3.200" /></svg>
              </VScroll>
              <HScroll>
                <svg width="17" height="15" viewBox="0 0 17 15" fill="none" stroke="#505050" strokeWidth="1.8"><path d="M9.5 4.3L6.3 7.5l3.200 3.200" /></svg>
                <Thumb $w={712} $h={15} />
                <Spacer />
                <svg width="16" height="15" viewBox="0 0 16 15" fill="none" stroke="#505050" strokeWidth="1.8"><path d="M7 4.3l3.200 3.200-3.200 3.200" /></svg>
              </HScroll>
            </SheetBody>
          </SheetPanel>
        </Canvas>
      </Workspace>
      <SheetTabs>
        <SheetTab $width={131} $left>
          <svg width="10" height="12" viewBox="0 0 10 12" fill="none" stroke={ink}><ellipse cx="5" cy="2.5" rx="4" ry="2" /><path d="M1 2.5v7q4 4 8 0v-7" /></svg>
          Data Source
        </SheetTab>
        {numberedTabs.map(([name, width]) => (
          <SheetTab key={name} $width={width} $active={name === 'Sheet 3'}>{name}</SheetTab>
        ))}
        <SheetTab $width={102}>
          <svg width="11" height="11" viewBox="0 0 11 11" fill="none" stroke={ink}><path d="M.5.5h10v10H.5zM.5 5.5h10M5.5.5v10" /></svg>
          Dashboard 1
        </SheetTab>
        <SheetTab $width={71}>
          <svg width="12" height="13" viewBox="0 0 12 13" fill="none" stroke={ink}><path d="M6 12.5L.5 10.5V.5L6 2.5L11.5.5v10zM6 2.5v10" /></svg>
          Story 1
        </SheetTab>
        <SheetTab $width={32}><ChartPlus /></SheetTab>
        <SheetTab $width={32}><GridPlus /></SheetTab>
        <SheetTab $width={32}><StoryPlus /></SheetTab>
      </SheetTabs>
      <StatusBar>
        <StatusText $width={50} $spacing={-0.1}>1 mark</StatusText>
        <StatusText $width={107} $spacing={-0.1}>1 row by 1 column</StatusText>
        <StatusText $width={839} $spacing={0.05}>SUM(Fresh): 5,280,131</StatusText>
        <StatusCell $width={127} />
        <StatusCell $width={27} />
        <StatusCell $width={27} />
        <StatusCell $width={47} />
        <StatusCell $width={71}>
          <svg width="56" height="8" viewBox="0 0 56 8" fill="#b0b0b0">
            <path d="M0 .5h1.500v7H0zM7 .5v7L2.5 4zM22 .5v7L17.5 4zM34 .5v7L38.5 4zM49 .5v7L53.5 4zM54.5.5H56v7h-1.500z" />
          </svg>
        </StatusCell>
        <StatusCell $width={68}>
          <svg width="54" height="11" viewBox="0 0 54 11" fill="#b8b8b8">
            <path d="M0 0h3v3H0zM4 0h3v3H4zM8 0h3v3H8zM0 4h3v3H0zM4 4h3v3H4zM8 4h3v3H8zM0 8h3v3H0zM4 8h3v3H4zM8 8h3v3H8zM21 0h11v7H21zM21 8h3v3h-3zM25 8h3v3h-3zM29 8h3v3h-3z" />
            <path d="M42 0h11v11H42z" fill="#666" />
          </svg>
        </StatusCell>
      </StatusBar>
      <AppTaskbar />
    </Window>
  );
}
